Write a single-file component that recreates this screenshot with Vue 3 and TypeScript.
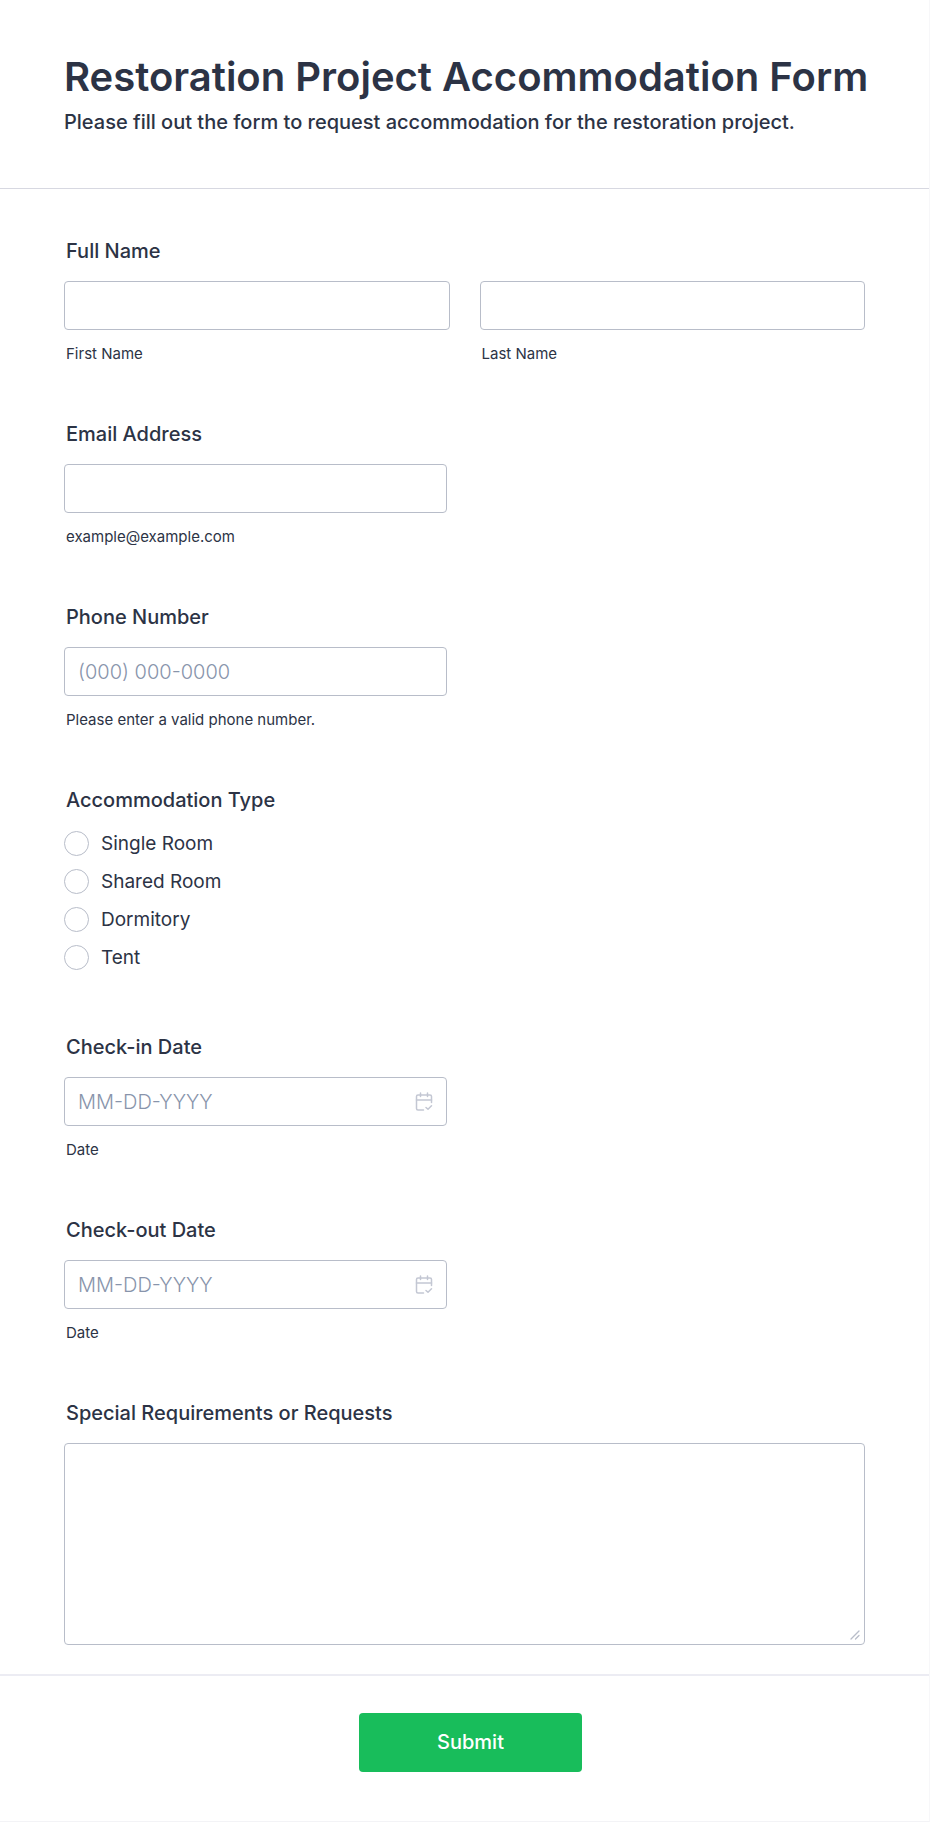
<script setup lang="ts">
import { ref } from 'vue'

interface TextField {
  id: string
  label: string
  hint: string
  type: string
  placeholder: string
  calendar: boolean
}

const contactFields: TextField[] = [
  { id: 'email', label: 'Email Address', hint: 'example@example.com', type: 'email', placeholder: '', calendar: false },
  { id: 'phone', label: 'Phone Number', hint: 'Please enter a valid phone number.', type: 'tel', placeholder: '(000) 000-0000', calendar: false },
]

const dateFields: TextField[] = [
  { id: 'check-in', label: 'Check-in Date', hint: 'Date', type: 'text', placeholder: 'MM-DD-YYYY', calendar: true },
  { id: 'check-out', label: 'Check-out Date', hint: 'Date', type: 'text', placeholder: 'MM-DD-YYYY', calendar: true },
]

const nameParts = [
  { id: 'first-name', hint: 'First Name' },
  { id: 'last-name', hint: 'Last Name' },
]

const roomTypes: string[] = ['Single Room', 'Shared Room', 'Dormitory', 'Tent']

const values = ref<Record<string, string>>({})
const roomType = ref('')
const requests = ref('')
</script>

<template>
  <form class="form" @submit.prevent>
    <header class="header">
      <h1 class="title">Restoration Project Accommodation Form</h1>
      <p class="subtitle">Please fill out the form to request accommodation for the restoration project.</p>
    </header>

    <div class="body">
      <fieldset class="group">
        <legend class="label">Full Name</legend>
        <div class="columns">
          <div v-for="part in nameParts" :key="part.id" class="column">
            <input :id="part.id" v-model="values[part.id]" class="control" type="text" />
            <label class="hint" :for="part.id">{{ part.hint }}</label>
          </div>
        </div>
      </fieldset>

      <div v-for="field in contactFields" :key="field.id" class="group">
        <label class="label" :for="field.id">{{ field.label }}</label>
        <div class="half">
          <input :id="field.id" v-model="values[field.id]" class="control" :type="field.type" :placeholder="field.placeholder" />
        </div>
        <span class="hint">{{ field.hint }}</span>
      </div>

      <fieldset class="group">
        <legend class="label">Accommodation Type</legend>
        <div class="options">
          <label v-for="room in roomTypes" :key="room" class="option">
            <input v-model="roomType" class="radio" type="radio" name="room-type" :value="room" />
            <span>{{ room }}</span>
          </label>
        </div>
      </fieldset>

      <div v-for="field in dateFields" :key="field.id" class="group">
        <label class="label" :for="field.id">{{ field.label }}</label>
        <div class="half">
          <input :id="field.id" v-model="values[field.id]" class="control" :type="field.type" :placeholder="field.placeholder" />
          <button v-if="field.calendar" class="picker" type="button" aria-label="Choose date">
            <svg width="18" height="20" viewBox="0 0 18 20" fill="none" stroke="currentColor" stroke-width="1.5" stroke-linecap="round" stroke-linejoin="round">
              <path d="M16.5 10.5V4.500Q16.500 3 15 3H3Q1.500 3 1.500 4.500V16.500Q1.500 18 3 18H8.500" />
              <path d="M1.500 8H16.500M5.500 1V4.500M12.500 1V4.500M11 15.500L13 17.300L16.500 13.800" />
            </svg>
          </button>
        </div>
        <span class="hint">{{ field.hint }}</span>
      </div>

      <div class="group">
        <label class="label" for="requests">Special Requirements or Requests</label>
        <div class="area">
          <textarea id="requests" v-model="requests" class="control textarea"></textarea>
          <svg class="grip" width="10" height="10" viewBox="0 0 10 10" fill="none" stroke="currentColor" stroke-width="1.300" stroke-linecap="round">
            <path d="M1 9L9 1M5.500 9L9 5.500" />
          </svg>
        </div>
      </div>
    </div>

    <footer class="footer">
      <button class="submit" type="submit">Submit</button>
    </footer>
  </form>
</template>

<style>
body {
  background: #fff;
}
</style>

<style scoped>
.form {
  box-sizing: border-box;
  border-right: 1px solid #f7f7f9;
  border-bottom: 1px solid #f3f3f6;
  color: #2c3345;
  background: #fff;
  font-family: Inter, "Liberation Sans", sans-serif;
}

.header {
  padding: 52px 52px 53px 64px;
  border-bottom: 1px solid #d7d8e1;
}

.title {
  margin: 0;
  font-size: 40px;
  font-weight: 600;
  line-height: 50px;
}

.subtitle {
  margin: 8px 0 0;
  font-size: 20px;
  font-weight: 500;
  line-height: 25px;
}

.body {
  display: flex;
  flex-direction: column;
  gap: 59px;
  padding: 50px 64px 29px;
}

.group {
  min-width: 0;
  margin: 0;
  padding: 0;
  border: 0;
}

.label {
  display: block;
  margin-bottom: 18px;
  padding: 0 2px;
  font-size: 20px;
  font-weight: 500;
  line-height: 24px;
}

.columns {
  display: grid;
  grid-template-columns: 1fr 1fr;
  gap: 30px;
}

.half {
  display: flex;
  position: relative;
  width: calc(50% - 18px);
}

.control {
  display: block;
  box-sizing: border-box;
  width: 100%;
  height: 49px;
  margin: 0;
  padding: 0 13px;
  border: 1px solid #b8bdc9;
  border-radius: 4px;
  background: #fff;
  color: #2c3345;
  font-family: inherit;
  font-size: 20px;
  line-height: 24px;
}

.control::placeholder {
  color: #8894ab;
  font-weight: 300;
  opacity: 1;
}

.hint {
  display: block;
  margin-top: 15px;
  padding: 0 2px;
  font-size: 15px;
  line-height: 18px;
}

.options {
  display: flex;
  flex-direction: column;
  align-items: flex-start;
  gap: 13px;
  padding: 1px 0 6px;
}

.option {
  display: flex;
  align-items: center;
  gap: 12px;
  font-size: 19px;
  line-height: 25px;
}

.radio {
  appearance: none;
  box-sizing: border-box;
  width: 25px;
  height: 25px;
  margin: 0;
  border: 1px solid #b8bdc9;
  border-radius: 50%;
  background: #fff;
}

.radio:checked {
  border: 8px solid #18bd5b;
}

.picker {
  display: flex;
  position: absolute;
  top: 0;
  right: 14px;
  bottom: 0;
  align-items: center;
  padding: 0;
  border: 0;
  background: none;
  color: #c3c7d3;
}

.area {
  position: relative;
}

.textarea {
  height: 202px;
  padding: 12px 13px;
  resize: none;
}

.grip {
  position: absolute;
  right: 5px;
  bottom: 5px;
  color: #b8bdc9;
  pointer-events: none;
}

.footer {
  display: flex;
  justify-content: center;
  padding: 37px 52px 49px 64px;
  border-top: 2px solid #ececf3;
}

.submit {
  min-width: 223px;
  padding: 17px 24px;
  border: 0;
  border-radius: 4px;
  background: #18bd5b;
  color: #fff;
  font-family: inherit;
  font-size: 20px;
  font-weight: 500;
  line-height: 25px;
}
</style>
